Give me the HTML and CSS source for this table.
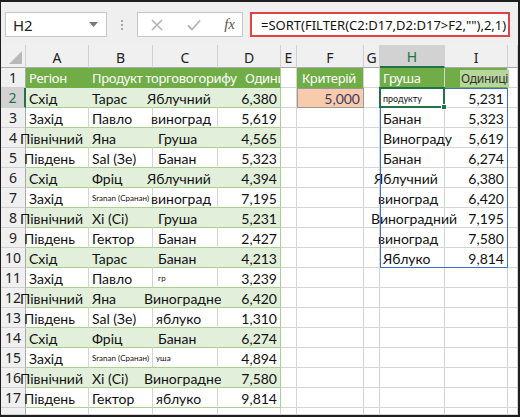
FILE: index.html
```html
<!DOCTYPE html>
<html lang="uk">
<head>
  <meta charset="UTF-8">
  <title>SORT FILTER</title>
  <link rel="stylesheet" href="styles.css">
</head>
<body>
<div class="frame">
  <div class="toolbar">
    <div class="namebox">
      <span>H2</span>
      <svg class="drop" width="9" height="5" viewBox="0 0 9 5"><path d="M0 0h9L4.5 5z" fill="#7a7a7a"/></svg>
    </div>
    <div class="grip"><i></i><i></i><i></i></div>
    <div class="btnbox">
      <svg width="12" height="12" viewBox="0 0 12 12"><path d="M1 1l10 10M11 1L1 11" stroke="#b3b3b3" stroke-width="1.6"/></svg>
      <svg width="14" height="12" viewBox="0 0 14 12"><path d="M1 6.5l4 4 8-9" stroke="#b3b3b3" stroke-width="1.8" fill="none"/></svg>
      <span class="fx">fx</span>
    </div>
    <div class="formula">=SORT(FILTER(C2:D17,D2:D17&gt;F2,""),2,1)</div>
  </div>

  <div class="sheet">
    <div class="ch corner"><svg width="13" height="13" viewBox="0 0 13 13"><path d="M13 0v13H0z" fill="#b8b8b8"/></svg></div>
    <div class="ch">A</div>
    <div class="ch">B</div>
    <div class="ch">C</div>
    <div class="ch">D</div>
    <div class="ch">E</div>
    <div class="ch">F</div>
    <div class="ch">G</div>
    <div class="ch sel">H</div>
    <div class="ch">I</div>
    <div class="ch"></div>

    <div class="row hdr">
      <div class="rh">1</div>
      <div class="c t"><span>Регіон</span></div>
      <div class="c t"><span>Продукт торговогорифу</span></div>
      <div class="c t"></div>
      <div class="c t end clip"><span>Одиниці</span></div>
      <div class="c"></div>
      <div class="c g"><span class="push">Критерій</span></div>
      <div class="c"></div>
      <div class="c g"><span>Груша</span></div>
      <div class="c g num"><span class="hl">Одиниці</span></div>
      <div class="c"></div>
    </div>

    <div class="row band">
      <div class="rh on">2</div>
      <div class="c t"><span>Схід</span></div>
      <div class="c t"><span>Тарас</span></div>
      <div class="c t"><span class="pull-m">Яблучний</span></div>
      <div class="c t end num"><span>6,380</span></div>
      <div class="c"></div>
      <div class="c crit num"><span>5,000</span></div>
      <div class="c"></div>
      <div class="c"><span class="tiny">продукту</span></div>
      <div class="c num"><span>5,231</span></div>
      <div class="c"></div>
    </div>

    <div class="row">
      <div class="rh">3</div>
      <div class="c t"><span>Захід</span></div>
      <div class="c t"><span>Павло</span></div>
      <div class="c t"><span class="pull-s">виноград</span></div>
      <div class="c t end num"><span>5,619</span></div>
      <div class="c"></div>
      <div class="c"></div>
      <div class="c"></div>
      <div class="c"><span>Банан</span></div>
      <div class="c num"><span>5,323</span></div>
      <div class="c"></div>
    </div>

    <div class="row band">
      <div class="rh">4</div>
      <div class="c t"><span class="pull-m">Північний</span></div>
      <div class="c t"><span>Яна</span></div>
      <div class="c t"><span class="push">Груша</span></div>
      <div class="c t end num"><span>4,565</span></div>
      <div class="c"></div>
      <div class="c"></div>
      <div class="c"></div>
      <div class="c"><span>Винограду</span></div>
      <div class="c num"><span>5,619</span></div>
      <div class="c"></div>
    </div>

    <div class="row">
      <div class="rh">5</div>
      <div class="c t"><span class="pull-s">Південь</span></div>
      <div class="c t"><span>Sal (Зе)</span></div>
      <div class="c t"><span class="push">Банан</span></div>
      <div class="c t end num"><span>5,323</span></div>
      <div class="c"></div>
      <div class="c"></div>
      <div class="c"></div>
      <div class="c"><span>Банан</span></div>
      <div class="c num"><span>6,274</span></div>
      <div class="c"></div>
    </div>

    <div class="row band">
      <div class="rh">6</div>
      <div class="c t"><span>Схід</span></div>
      <div class="c t"><span>Фріц</span></div>
      <div class="c t"><span class="pull-m">Яблучний</span></div>
      <div class="c t end num"><span>4,394</span></div>
      <div class="c"></div>
      <div class="c"></div>
      <div class="c"></div>
      <div class="c"><span class="pull-m">Яблучний</span></div>
      <div class="c num"><span>6,380</span></div>
      <div class="c"></div>
    </div>

    <div class="row">
      <div class="rh">7</div>
      <div class="c t"><span>Захід</span></div>
      <div class="c t"><span class="micro">Sranan (Сранан)</span></div>
      <div class="c t"><span class="pull-s">виноград</span></div>
      <div class="c t end num"><span>7,195</span></div>
      <div class="c"></div>
      <div class="c"></div>
      <div class="c"></div>
      <div class="c"><span class="pull-s">виноград</span></div>
      <div class="c num"><span>6,420</span></div>
      <div class="c"></div>
    </div>

    <div class="row band">
      <div class="rh">8</div>
      <div class="c t"><span class="pull-m">Північний</span></div>
      <div class="c t"><span>Xi (Сі)</span></div>
      <div class="c t"><span class="push">Груша</span></div>
      <div class="c t end num"><span>5,231</span></div>
      <div class="c"></div>
      <div class="c"></div>
      <div class="c"></div>
      <div class="c"><span class="pull-l">Виноградний</span></div>
      <div class="c num"><span>7,195</span></div>
      <div class="c"></div>
    </div>

    <div class="row">
      <div class="rh">9</div>
      <div class="c t"><span class="pull-s">Південь</span></div>
      <div class="c t"><span>Гектор</span></div>
      <div class="c t"><span class="push">Банан</span></div>
      <div class="c t end num"><span>2,427</span></div>
      <div class="c"></div>
      <div class="c"></div>
      <div class="c"></div>
      <div class="c"><span class="pull-s">виноград</span></div>
      <div class="c num"><span>7,580</span></div>
      <div class="c"></div>
    </div>

    <div class="row band">
      <div class="rh">10</div>
      <div class="c t"><span>Схід</span></div>
      <div class="c t"><span>Тарас</span></div>
      <div class="c t"><span class="push">Банан</span></div>
      <div class="c t end num"><span>4,213</span></div>
      <div class="c"></div>
      <div class="c"></div>
      <div class="c"></div>
      <div class="c"><span>Яблуко</span></div>
      <div class="c num"><span>9,814</span></div>
      <div class="c"></div>
    </div>

    <div class="row">
      <div class="rh">11</div>
      <div class="c t"><span>Захід</span></div>
      <div class="c t"><span>Павло</span></div>
      <div class="c t"><span class="micro push">гр</span></div>
      <div class="c t end num"><span>3,239</span></div>
      <div class="c"></div>
      <div class="c"></div>
      <div class="c"></div>
      <div class="c"></div>
      <div class="c"></div>
      <div class="c"></div>
    </div>

    <div class="row band">
      <div class="rh">12</div>
      <div class="c t"><span class="pull-m">Північний</span></div>
      <div class="c t"><span>Яна</span></div>
      <div class="c t"><span class="pull-l">Виноградне</span></div>
      <div class="c t end num"><span>6,420</span></div>
      <div class="c"></div>
      <div class="c"></div>
      <div class="c"></div>
      <div class="c"></div>
      <div class="c"></div>
      <div class="c"></div>
    </div>

    <div class="row">
      <div class="rh">13</div>
      <div class="c t"><span class="pull-s">Південь</span></div>
      <div class="c t"><span>Sal (Зе)</span></div>
      <div class="c t"><span>яблуко</span></div>
      <div class="c t end num"><span>1,310</span></div>
      <div class="c"></div>
      <div class="c"></div>
      <div class="c"></div>
      <div class="c"></div>
      <div class="c"></div>
      <div class="c"></div>
    </div>

    <div class="row band">
      <div class="rh">14</div>
      <div class="c t"><span>Схід</span></div>
      <div class="c t"><span>Фріц</span></div>
      <div class="c t"><span class="push">Банан</span></div>
      <div class="c t end num"><span>6,274</span></div>
      <div class="c"></div>
      <div class="c"></div>
      <div class="c"></div>
      <div class="c"></div>
      <div class="c"></div>
      <div class="c"></div>
    </div>

    <div class="row">
      <div class="rh">15</div>
      <div class="c t"><span>Захід</span></div>
      <div class="c t"><span class="micro">Sranan (Сранан)</span></div>
      <div class="c t"><span class="micro">уша</span></div>
      <div class="c t end num"><span>4,894</span></div>
      <div class="c"></div>
      <div class="c"></div>
      <div class="c"></div>
      <div class="c"></div>
      <div class="c"></div>
      <div class="c"></div>
    </div>

    <div class="row band">
      <div class="rh">16</div>
      <div class="c t"><span class="pull-m">Північний</span></div>
      <div class="c t"><span>Xi (Сі)</span></div>
      <div class="c t"><span class="pull-l">Виноградне</span></div>
      <div class="c t end num"><span>7,580</span></div>
      <div class="c"></div>
      <div class="c"></div>
      <div class="c"></div>
      <div class="c"></div>
      <div class="c"></div>
      <div class="c"></div>
    </div>

    <div class="row">
      <div class="rh">17</div>
      <div class="c t"><span class="pull-s">Південь</span></div>
      <div class="c t"><span>Гектор</span></div>
      <div class="c t"><span>яблуко</span></div>
      <div class="c t end num"><span>9,814</span></div>
      <div class="c"></div>
      <div class="c"></div>
      <div class="c"></div>
      <div class="c"></div>
      <div class="c"></div>
      <div class="c"></div>
    </div>

    <div class="row">
      <div class="rh"></div>
      <div class="c"></div>
      <div class="c"></div>
      <div class="c"></div>
      <div class="c"></div>
      <div class="c"></div>
      <div class="c"></div>
      <div class="c"></div>
      <div class="c"></div>
      <div class="c"></div>
      <div class="c"></div>
    </div>

    <!-- spill range and active cell drawn over the grid -->
    <div class="spill"></div>
    <div class="cursor"><i class="handle"></i></div>
  </div>
</div>
</body>
</html>
```

FILE: styles.css
```css
* {
  box-sizing: border-box;
}
body {
  margin: 0;
  width: 520px;
  height: 417px;
  overflow: hidden;
  background: #fff;
}
.frame {
  width: 520px;
  height: 417px;
  border: 2px solid #1e1e1e;
  border-left-width: 1px;
  display: flex;
  flex-direction: column;
  overflow: hidden;
}

/* formula bar */
.toolbar {
  height: 43px;
  flex: none;
  background: #efefef;
  display: flex;
  align-items: flex-start;
  padding: 10px 0 0 4px;
  font-family: "Noto Sans", sans-serif;
}
.namebox {
  width: 102px;
  height: 25px;
  background: #fff;
  border: 1px solid #c6c6c6;
  display: flex;
  align-items: center;
  justify-content: space-between;
  padding: 0 8px 0 7px;
  font-size: 15px;
  color: #222;
}
.grip {
  width: 30px;
  height: 25px;
  display: flex;
  flex-direction: column;
  align-items: center;
  justify-content: center;
  gap: 2px;
}
.grip i {
  width: 2px;
  height: 2px;
  background: #a8a8a8;
}
.btnbox {
  width: 106px;
  height: 25px;
  background: #fff;
  border: 1px solid #c6c6c6;
  display: flex;
  align-items: center;
  justify-content: space-between;
  padding: 0 7px 0 13px;
}
.fx {
  font-family: "Liberation Serif", serif;
  font-style: italic;
  font-size: 15px;
  color: #555;
}
.formula {
  margin-left: 7px;
  width: 260px;
  height: 25px;
  background: #fff;
  border: 2px solid #e04343;
  display: flex;
  align-items: center;
  padding-left: 9px;
  font-size: 13px;
  color: #111;
  white-space: nowrap;
}

/* worksheet */
.sheet {
  flex: 1;
  position: relative;
  display: grid;
  grid-template-columns: 25px 63px 64px 65px 63px 16px 67px 16px 65px 63px 1fr;
  grid-template-rows: 23px repeat(17, 20px) 1fr;
  font-family: "Lato", "Liberation Sans", sans-serif;
  font-size: 14px;
  color: #111;
}
.row {
  display: contents;
}
.ch {
  background: #f0f0f0;
  border-right: 1px solid #d0d0d0;
  border-bottom: 1px solid #ababab;
  display: flex;
  align-items: center;
  justify-content: center;
  padding-top: 2px;
  font-family: "Noto Sans", sans-serif;
  font-size: 14px;
  color: #222;
}
.ch.corner {
  justify-content: flex-end;
  align-items: flex-end;
  padding: 0 3px 3px 0;
}
.ch.sel {
  background: #d2d2d2;
  color: #217346;
  border-bottom: 2px solid #217346;
}
.rh {
  background: #f0f0f0;
  border-right: 1px solid #ababab;
  border-bottom: 1px solid #d0d0d0;
  display: flex;
  align-items: center;
  justify-content: center;
  font-family: "Noto Sans", sans-serif;
  font-size: 14px;
  color: #222;
}
.rh.on {
  background: #d2d2d2;
  color: #217346;
  border-right: 2px solid #217346;
}
.c {
  border-right: 1px solid #d4d4d4;
  border-bottom: 1px solid #d4d4d4;
  display: flex;
  align-items: center;
  padding: 1px 3px 0;
  white-space: nowrap;
  min-width: 0;
}
.c span {
  position: relative;
  z-index: 1;
}
.num {
  justify-content: flex-end;
}
.clip {
  overflow: hidden;
}

/* excel table A:D */
.t {
  border-bottom-color: #a9d08e;
}
.band .t {
  background: #e2efda;
  border-right-color: #e2efda;
}
.hdr .t,
.g {
  background: #70ad47;
  border-right-color: #70ad47;
  border-bottom-color: #70ad47;
  color: #fff;
  font-family: "Noto Sans", sans-serif;
  font-size: 13px;
  letter-spacing: -0.3px;
}
.t.end {
  border-right-color: #a9d08e;
}
.hdr .t.end {
  padding-left: 27px;
}
.g {
  border-right-color: #d4d4d4;
}
.hl {
  background: #b7d69c;
  color: #333;
  font-size: 12px;
  padding: 0 1px;
  margin-right: -5px;
}
.crit {
  background: #f8cbad;
  border: 1px solid #9a9a9a;
  color: #3d3b5e;
}

.pull-s {
  margin-left: -5px;
}
.pull-m {
  margin-left: -9px;
}
.pull-l {
  margin-left: -12px;
}
.push {
  margin-left: 2px;
}
.tiny {
  font-size: 9px;
}
.micro {
  font-size: 8px;
}

.spill {
  position: absolute;
  grid-row: 3 / 12;
  grid-column: 9 / 11;
  inset: 0;
  border: 1px solid #3f6fc6;
  pointer-events: none;
  z-index: 2;
}
.cursor {
  position: absolute;
  grid-row: 3 / 4;
  grid-column: 9 / 10;
  inset: -1px 0 0 -1px;
  border: 2px solid #217346;
  z-index: 3;
}
.handle {
  position: absolute;
  right: -4px;
  bottom: -4px;
  width: 6px;
  height: 6px;
  background: #217346;
  border: 1px solid #fff;
}
```
